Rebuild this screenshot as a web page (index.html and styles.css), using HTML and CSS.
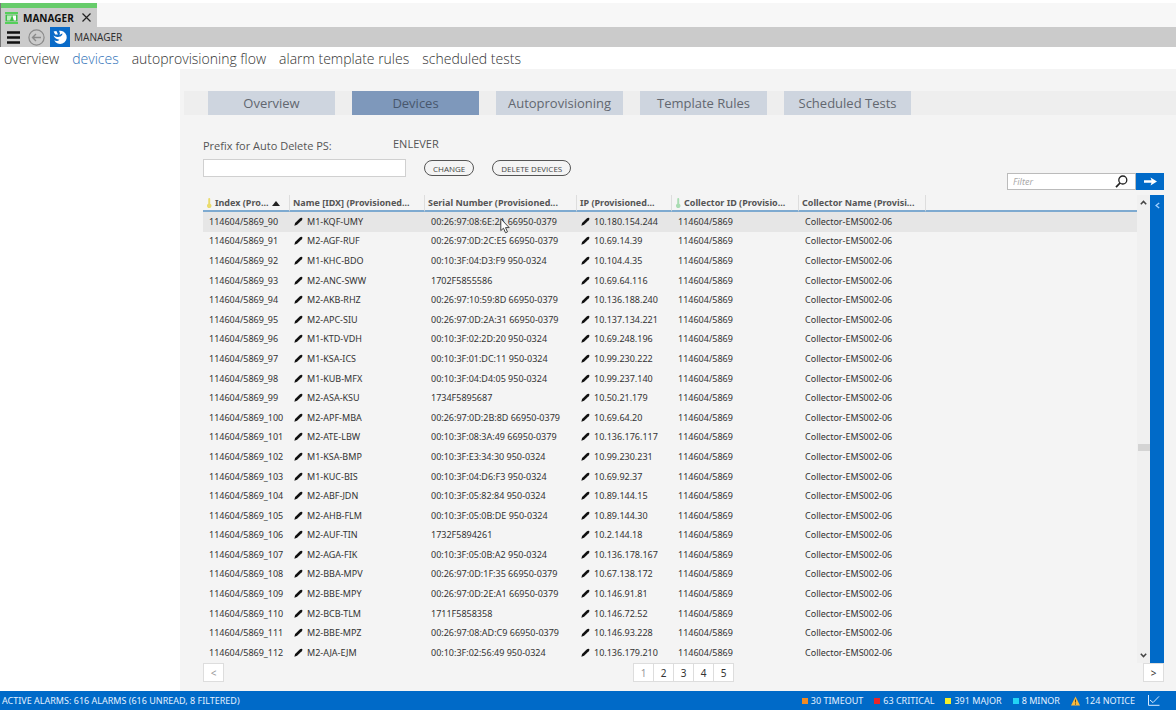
FILE: index.html
```html
<!DOCTYPE html>
<html lang="en">
<head>
    <meta charset="UTF-8">
    <meta name="viewport" content="width=device-width, initial-scale=1.0">
    <title>Manager - Devices</title>
    <link rel="stylesheet" href="styles.css">
</head>
<body>
    <svg class="sprite" aria-hidden="true">
        <symbol id="pencil" viewBox="0 0 10 10">
            <path d="M0.4 9.6 L1.2 6.8 L6.6 1.4 Q8 0.3 9.1 1.1 Q9.9 2.1 8.6 3.5 L3.4 8.7 Z"/>
        </symbol>
        <symbol id="key" viewBox="0 0 8 14">
            <path d="M3 1.5 a1.3 1.3 0 0 1 2.6 0 V8 a3 3 0 1 1 -2.6 0 Z"/>
        </symbol>
    </svg>

    <header class="window-tabs">
        <div class="window-tab">
            <svg class="app-icon" width="13" height="12" viewBox="0 0 13 12">
                <path d="M0 0 H13 V2 H0 Z M0 10 H13 V12 H0 Z" fill="#55cf5a"/>
                <path d="M0.5 2.6 H12.5 V9.4 H0.5 Z" fill="#3fbf48"/>
                <path d="M2 3.4 H7 L5 8.6 H2 Z" fill="#b9efbb"/>
                <path d="M7.4 3.4 H11 V8.6 H8.8 Z" fill="#fff"/>
            </svg>
            <span>MANAGER</span>
            <button class="close" aria-label="Close tab">
                <svg width="9" height="9" viewBox="0 0 9 9"><path d="M0.5 0.5 L8.5 8.5 M8.5 0.5 L0.5 8.5"/></svg>
            </button>
        </div>
    </header>

    <div class="toolbar">
        <button class="menu" aria-label="Menu">
            <svg width="13" height="13" viewBox="0 0 13 13"><path d="M0 1.5 H13 M0 6.5 H13 M0 11.5 H13" stroke="#111" stroke-width="2.4"/></svg>
        </button>
        <button class="back" aria-label="Back">
            <svg width="17" height="17" viewBox="0 0 17 17" fill="none" stroke="#8a8a8a">
                <circle cx="8.5" cy="8.5" r="7.6" stroke-width="1.2"/>
                <path d="M13 8.5 H4.5 M8 5 L4.5 8.5 L8 12" stroke-width="1.4"/>
            </svg>
        </button>
        <svg class="module-icon" width="20" height="20" viewBox="0 0 20 20">
            <rect width="20" height="20" fill="#0a6bc8"/>
            <path d="M9 3.8 A6.6 6.6 0 1 1 4.2 13.2 Q7.4 15 9.4 12.8 Q5.4 12.6 3.4 8.6 Q6 10.6 9 9.8 Q12 9.6 12.6 6.6 Q11 6.8 9.6 8.2 Q10.4 5.6 9 3.8 Z" fill="#fff"/>
            <path d="M3.6 4.6 L6.4 4 L8 7.6 L5.2 7.4 Z" fill="#fff"/>
        </svg>
        <span>MANAGER</span>
    </div>

    <nav class="page-nav">
        <a href="#">overview</a>
        <a href="#" class="current">devices</a>
        <a href="#">autoprovisioning flow</a>
        <a href="#">alarm template rules</a>
        <a href="#">scheduled tests</a>
    </nav>

    <main class="panel">
        <div class="tab-strip">
            <button class="tab">Overview</button>
            <button class="tab active">Devices</button>
            <button class="tab">Autoprovisioning</button>
            <button class="tab">Template Rules</button>
            <button class="tab">Scheduled Tests</button>
        </div>

        <div class="tools">
            <div class="prefix-form">
                <div class="prefix-labels">
                    <label for="prefix">Prefix for Auto Delete PS:</label>
                    <span class="prefix-value">ENLEVER</span>
                </div>
                <div class="prefix-controls">
                    <input type="text" id="prefix">
                    <button class="pill">CHANGE</button>
                    <button class="pill">DELETE DEVICES</button>
                </div>
            </div>
            <div class="filter">
                <div class="filter-box">
                    <input type="text" placeholder="Filter" aria-label="Filter">
                    <svg width="13" height="13" viewBox="0 0 13 13" fill="none" stroke="#222">
                        <circle cx="7.8" cy="5" r="4" stroke-width="1.3"/>
                        <path d="M5 8 L1 12.2" stroke-width="1.8"/>
                    </svg>
                </div>
                <button class="go" aria-label="Apply filter">
                    <svg width="13" height="9" viewBox="0 0 13 9"><path d="M0 3.2 H7.5 L6.5 0.5 L13 4.5 L6.5 8.5 L7.5 5.8 H0 Z" fill="#fff"/></svg>
                </button>
            </div>
        </div>

        <div class="grid">
            <div class="table-wrap">
                <table class="devices">
                    <colgroup>
                        <col class="col-index"><col class="col-name"><col class="col-serial"><col class="col-ip"><col class="col-cid"><col class="col-cname"><col>
                    </colgroup>
                    <thead>
                        <tr>
                            <th><svg class="key yellow"><use href="#key"/></svg>Index (Pro...<span class="sort"></span></th>
                            <th>Name [IDX] (Provisioned...</th>
                            <th>Serial Number (Provisioned...</th>
                            <th>IP (Provisioned...</th>
                            <th><svg class="key green"><use href="#key"/></svg>Collector ID (Provisio...</th>
                            <th>Collector Name (Provisi...</th>
                            <th></th>
                        </tr>
                    </thead>
                    <tbody>
                        <tr class="selected"><td>114604/5869_90</td><td><svg class="edit"><use href="#pencil"/></svg>M1-KQF-UMY</td><td class="pointed">00:26:97:08:6E:2A 66950-0379<svg class="cursor" viewBox="0 0 10 16"><path d="M0.8 0.8 V12.6 L3.5 10.2 L5.5 14.8 L7.5 13.9 L5.5 9.6 H9.2 Z"/></svg></td><td><svg class="edit"><use href="#pencil"/></svg>10.180.154.244</td><td>114604/5869</td><td>Collector-EMS002-06</td><td></td></tr>
                        <tr><td>114604/5869_91</td><td><svg class="edit"><use href="#pencil"/></svg>M2-AGF-RUF</td><td>00:26:97:0D:2C:E5 66950-0379</td><td><svg class="edit"><use href="#pencil"/></svg>10.69.14.39</td><td>114604/5869</td><td>Collector-EMS002-06</td><td></td></tr>
                        <tr><td>114604/5869_92</td><td><svg class="edit"><use href="#pencil"/></svg>M1-KHC-BDO</td><td>00:10:3F:04:D3:F9 950-0324</td><td><svg class="edit"><use href="#pencil"/></svg>10.104.4.35</td><td>114604/5869</td><td>Collector-EMS002-06</td><td></td></tr>
                        <tr><td>114604/5869_93</td><td><svg class="edit"><use href="#pencil"/></svg>M2-ANC-SWW</td><td>1702F5855586</td><td><svg class="edit"><use href="#pencil"/></svg>10.69.64.116</td><td>114604/5869</td><td>Collector-EMS002-06</td><td></td></tr>
                        <tr><td>114604/5869_94</td><td><svg class="edit"><use href="#pencil"/></svg>M2-AKB-RHZ</td><td>00:26:97:10:59:8D 66950-0379</td><td><svg class="edit"><use href="#pencil"/></svg>10.136.188.240</td><td>114604/5869</td><td>Collector-EMS002-06</td><td></td></tr>
                        <tr><td>114604/5869_95</td><td><svg class="edit"><use href="#pencil"/></svg>M2-APC-SIU</td><td>00:26:97:0D:2A:31 66950-0379</td><td><svg class="edit"><use href="#pencil"/></svg>10.137.134.221</td><td>114604/5869</td><td>Collector-EMS002-06</td><td></td></tr>
                        <tr><td>114604/5869_96</td><td><svg class="edit"><use href="#pencil"/></svg>M1-KTD-VDH</td><td>00:10:3F:02:2D:20 950-0324</td><td><svg class="edit"><use href="#pencil"/></svg>10.69.248.196</td><td>114604/5869</td><td>Collector-EMS002-06</td><td></td></tr>
                        <tr><td>114604/5869_97</td><td><svg class="edit"><use href="#pencil"/></svg>M1-KSA-ICS</td><td>00:10:3F:01:DC:11 950-0324</td><td><svg class="edit"><use href="#pencil"/></svg>10.99.230.222</td><td>114604/5869</td><td>Collector-EMS002-06</td><td></td></tr>
                        <tr><td>114604/5869_98</td><td><svg class="edit"><use href="#pencil"/></svg>M1-KUB-MFX</td><td>00:10:3F:04:D4:05 950-0324</td><td><svg class="edit"><use href="#pencil"/></svg>10.99.237.140</td><td>114604/5869</td><td>Collector-EMS002-06</td><td></td></tr>
                        <tr><td>114604/5869_99</td><td><svg class="edit"><use href="#pencil"/></svg>M2-ASA-KSU</td><td>1734F5895687</td><td><svg class="edit"><use href="#pencil"/></svg>10.50.21.179</td><td>114604/5869</td><td>Collector-EMS002-06</td><td></td></tr>
                        <tr><td>114604/5869_100</td><td><svg class="edit"><use href="#pencil"/></svg>M2-APF-MBA</td><td>00:26:97:0D:2B:8D 66950-0379</td><td><svg class="edit"><use href="#pencil"/></svg>10.69.64.20</td><td>114604/5869</td><td>Collector-EMS002-06</td><td></td></tr>
                        <tr><td>114604/5869_101</td><td><svg class="edit"><use href="#pencil"/></svg>M2-ATE-LBW</td><td>00:10:3F:08:3A:49 66950-0379</td><td><svg class="edit"><use href="#pencil"/></svg>10.136.176.117</td><td>114604/5869</td><td>Collector-EMS002-06</td><td></td></tr>
                        <tr><td>114604/5869_102</td><td><svg class="edit"><use href="#pencil"/></svg>M1-KSA-BMP</td><td>00:10:3F:E3:34:30 950-0324</td><td><svg class="edit"><use href="#pencil"/></svg>10.99.230.231</td><td>114604/5869</td><td>Collector-EMS002-06</td><td></td></tr>
                        <tr><td>114604/5869_103</td><td><svg class="edit"><use href="#pencil"/></svg>M1-KUC-BIS</td><td>00:10:3F:04:D6:F3 950-0324</td><td><svg class="edit"><use href="#pencil"/></svg>10.69.92.37</td><td>114604/5869</td><td>Collector-EMS002-06</td><td></td></tr>
                        <tr><td>114604/5869_104</td><td><svg class="edit"><use href="#pencil"/></svg>M2-ABF-JDN</td><td>00:10:3F:05:82:84 950-0324</td><td><svg class="edit"><use href="#pencil"/></svg>10.89.144.15</td><td>114604/5869</td><td>Collector-EMS002-06</td><td></td></tr>
                        <tr><td>114604/5869_105</td><td><svg class="edit"><use href="#pencil"/></svg>M2-AHB-FLM</td><td>00:10:3F:05:0B:DE 950-0324</td><td><svg class="edit"><use href="#pencil"/></svg>10.89.144.30</td><td>114604/5869</td><td>Collector-EMS002-06</td><td></td></tr>
                        <tr><td>114604/5869_106</td><td><svg class="edit"><use href="#pencil"/></svg>M2-AUF-TIN</td><td>1732F5894261</td><td><svg class="edit"><use href="#pencil"/></svg>10.2.144.18</td><td>114604/5869</td><td>Collector-EMS002-06</td><td></td></tr>
                        <tr><td>114604/5869_107</td><td><svg class="edit"><use href="#pencil"/></svg>M2-AGA-FIK</td><td>00:10:3F:05:0B:A2 950-0324</td><td><svg class="edit"><use href="#pencil"/></svg>10.136.178.167</td><td>114604/5869</td><td>Collector-EMS002-06</td><td></td></tr>
                        <tr><td>114604/5869_108</td><td><svg class="edit"><use href="#pencil"/></svg>M2-BBA-MPV</td><td>00:26:97:0D:1F:35 66950-0379</td><td><svg class="edit"><use href="#pencil"/></svg>10.67.138.172</td><td>114604/5869</td><td>Collector-EMS002-06</td><td></td></tr>
                        <tr><td>114604/5869_109</td><td><svg class="edit"><use href="#pencil"/></svg>M2-BBE-MPY</td><td>00:26:97:0D:2E:A1 66950-0379</td><td><svg class="edit"><use href="#pencil"/></svg>10.146.91.81</td><td>114604/5869</td><td>Collector-EMS002-06</td><td></td></tr>
                        <tr><td>114604/5869_110</td><td><svg class="edit"><use href="#pencil"/></svg>M2-BCB-TLM</td><td>1711F5858358</td><td><svg class="edit"><use href="#pencil"/></svg>10.146.72.52</td><td>114604/5869</td><td>Collector-EMS002-06</td><td></td></tr>
                        <tr><td>114604/5869_111</td><td><svg class="edit"><use href="#pencil"/></svg>M2-BBE-MPZ</td><td>00:26:97:08:AD:C9 66950-0379</td><td><svg class="edit"><use href="#pencil"/></svg>10.146.93.228</td><td>114604/5869</td><td>Collector-EMS002-06</td><td></td></tr>
                        <tr><td>114604/5869_112</td><td><svg class="edit"><use href="#pencil"/></svg>M2-AJA-EJM</td><td>00:10:3F:02:56:49 950-0324</td><td><svg class="edit"><use href="#pencil"/></svg>10.136.179.210</td><td>114604/5869</td><td>Collector-EMS002-06</td><td></td></tr>
                    </tbody>
                </table>
            </div>
            <div class="scrollbar">
                <svg width="7" height="5" viewBox="0 0 7 5"><path d="M0.8 4.2 L3.5 1.4 L6.2 4.2"/></svg>
                <div class="thumb"></div>
                <svg width="7" height="5" viewBox="0 0 7 5"><path d="M0.8 0.8 L3.5 3.6 L6.2 0.8"/></svg>
            </div>
            <button class="drawer" aria-label="Expand panel">
                <svg width="5" height="7" viewBox="0 0 5 7"><path d="M4.2 1 L1 3.5 L4.2 6"/></svg>
            </button>
        </div>

        <div class="pager">
            <button disabled>&lt;</button>
            <div class="pages">
                <button disabled>1</button>
                <button>2</button>
                <button>3</button>
                <button>4</button>
                <button>5</button>
            </div>
            <button>&gt;</button>
        </div>
    </main>

    <footer class="status">
        <span class="active-alarms">ACTIVE ALARMS: 616 ALARMS (616 UNREAD, 8 FILTERED)</span>
        <span class="alarm timeout">30 TIMEOUT</span>
        <span class="alarm critical">63 CRITICAL</span>
        <span class="alarm major">391 MAJOR</span>
        <span class="alarm minor">8 MINOR</span>
        <span class="notice">
            <svg width="9" height="10" viewBox="0 0 9 10"><path d="M4.5 0.5 L9 9.5 H0 Z" fill="#f8b93c"/><path d="M4.5 3.5 V6.5 M4.5 7.4 V8.6" stroke="#5c4a20"/></svg>
            124 NOTICE
        </span>
        <svg width="12" height="11" viewBox="0 0 12 11" fill="none" stroke="#d8eaff"><path d="M0.5 0 V10.3 H11.5 M2 5 L5 7.6 L11 1.4"/></svg>
    </footer>
</body>
</html>
```
FILE: styles.css
```css
* {
    box-sizing: border-box;
}
body {
    margin: 0;
    height: 100vh;
    display: flex;
    flex-direction: column;
    padding: 3px 0 2px;
    background: #fff;
    color: #333;
    font-family: "Noto Sans", "Open Sans", sans-serif;
    font-size: 9px;
}
button, input {
    font-family: inherit;
    font-size: inherit;
    color: inherit;
    margin: 0;
    padding: 0;
    border: 0;
    background: none;
}
svg {
    flex: none;
}
.sprite {
    position: absolute;
    width: 0;
    height: 0;
}

/* window chrome */
.window-tabs {
    display: flex;
    height: 24px;
    background: #f7f7f7;
    border-left: 1px solid #777;
}
.window-tab {
    display: flex;
    align-items: center;
    gap: 5px;
    width: 96px;
    padding-left: 4px;
    border-top: 5px solid #67cc6b;
    background: #cbcbcb;
    color: #111;
    font-family: "Open Sans", sans-serif;
    font-size: 10px;
    font-weight: bold;
}
.close {
    display: flex;
    margin-left: auto;
    margin-right: 6px;
}
.close path {
    stroke: #222;
    stroke-width: 1.2;
}
.toolbar {
    display: flex;
    align-items: center;
    height: 20px;
    padding-left: 6px;
    background: #cbcbcb;
    border-left: 1px solid #777;
    font-size: 10px;
}
.toolbar button {
    display: flex;
    margin-right: 8px;
}
.toolbar .back {
    margin-right: 5px;
}
.module-icon {
    margin-right: 4px;
}
.page-nav {
    display: flex;
    gap: 13px;
    height: 22px;
    padding-left: 4px;
    line-height: 24px;
    font-family: "Open Sans", sans-serif;
    font-size: 14px;
    font-weight: 300;
}
.page-nav a {
    color: #333;
    text-decoration: none;
}
.page-nav .current {
    color: #2f70b8;
}

/* main panel */
.panel {
    flex: 1;
    min-height: 0;
    display: flex;
    flex-direction: column;
    margin-left: 180px;
    padding: 22px 12px 9px 23px;
    background: #f4f4f4;
}
.tab-strip {
    display: flex;
    gap: 17px;
    height: 24px;
    margin: 0 -12px 0 -19px;
    padding-left: 24px;
    background: #eee;
}
.tab {
    width: 127px;
    background: #ced5df;
    color: #62676f;
    font-family: "Open Sans", sans-serif;
    font-size: 13px;
}
.tab.active {
    background: #7e98bb;
    color: #48576d;
}
.tools {
    display: flex;
    justify-content: space-between;
    align-items: flex-end;
    height: 80px;
}
.prefix-form {
    padding-bottom: 18px;
    font-family: "Open Sans", sans-serif;
    font-size: 11px;
}
.prefix-labels {
    display: flex;
    height: 24px;
    line-height: 17px;
    color: #555;
}
.prefix-labels label {
    width: 190px;
    padding-top: 2px;
}
.prefix-controls {
    display: flex;
    align-items: center;
}
.prefix-controls input {
    width: 203px;
    height: 18px;
    padding: 0 4px;
    border: 1px solid #d0d0d0;
    background: #fff;
}
.pill {
    height: 16px;
    margin-left: 18px;
    padding: 0 8px;
    border: 1px solid #555;
    border-radius: 8px;
    color: #444;
    font-size: 8px;
}
.filter {
    display: flex;
    height: 17px;
    margin-bottom: 5px;
}
.filter-box {
    display: flex;
    align-items: center;
    width: 129px;
    padding: 0 7px 0 5px;
    border: 1px solid #bbb;
    background: #fff;
}
.filter-box input {
    flex: 1;
    min-width: 0;
}
.filter-box input::placeholder {
    color: #aaa;
    font-style: italic;
}
.go {
    display: flex;
    align-items: center;
    justify-content: center;
    width: 28px;
    background: #006ac8;
}

/* device table */
.grid {
    flex: 1;
    min-height: 0;
    display: flex;
}
.table-wrap {
    flex: 1;
    min-width: 0;
}
.devices {
    width: 100%;
    height: 100%;
    table-layout: fixed;
    border-collapse: separate;
    border-spacing: 0;
    white-space: nowrap;
}
.col-index {
    width: 87px;
}
.col-name {
    width: 135px;
}
.col-serial {
    width: 152px;
}
.col-ip {
    width: 95px;
}
.col-cid, .col-cname {
    width: 127px;
}
.devices th {
    height: 17px;
    padding: 0 0 0 3px;
    border-right: 1px solid #ddd;
    border-bottom: 2px solid #7eaad0;
    color: #555;
    font-weight: bold;
    text-align: left;
    line-height: 14px;
}
.devices td {
    padding: 0 0 0 6px;
    line-height: 12px;
}
.devices th:last-child {
    border-right: 0;
}
.selected td {
    background: #e6e6e6;
}
.key {
    width: 6px;
    height: 12px;
    margin-right: 3px;
    vertical-align: middle;
}
.yellow {
    fill: #eadb6c;
}
.green {
    fill: #a9dcb2;
}
.sort {
    display: inline-block;
    margin-left: 4px;
    border: 4px solid transparent;
    border-top: 0;
    border-bottom: 5px solid #222;
}
.edit {
    width: 9px;
    height: 9px;
    margin-right: 4px;
    margin-left: -2px;
    vertical-align: -1px;
    fill: #111;
}
.pointed {
    position: relative;
}
.cursor {
    position: absolute;
    left: 75px;
    top: 6px;
    width: 10px;
    height: 16px;
    fill: #fff;
    stroke: #444;
}
.scrollbar {
    display: flex;
    flex-direction: column;
    align-items: center;
    justify-content: space-between;
    width: 13px;
    padding: 5px 0;
    background: #f0f0f0;
}
.scrollbar path {
    fill: none;
    stroke: #444;
    stroke-width: 1.5;
}
.thumb {
    width: 12px;
    height: 7px;
    margin-top: 36px;
    background: #d4d4d4;
}
.drawer {
    display: flex;
    justify-content: center;
    width: 14px;
    padding-top: 7px;
    background: #006ac8;
}
.drawer path {
    fill: none;
    stroke: #9fd0ff;
    stroke-width: 1.4;
}
.pager {
    display: flex;
    justify-content: space-between;
}
.pager button {
    min-width: 21px;
    height: 19px;
    border: 1px solid #ddd;
    background: #fff;
    font-size: 10px;
}
.pager button:disabled {
    color: #999;
}
.pages {
    display: flex;
}
.pages button + button {
    margin-left: -1px;
}

/* alarm bar */
.status {
    display: flex;
    align-items: center;
    height: 19px;
    padding: 0 16px 0 2px;
    background: #006ac8;
    color: #e4f1ff;
}
.active-alarms {
    flex: 1;
}
.alarm {
    margin-right: 11px;
}
.alarm::before {
    content: "";
    display: inline-block;
    width: 6px;
    height: 6px;
    margin-right: 3px;
}
.timeout::before {
    background: #f08a24;
}
.critical::before {
    background: #e8262a;
}
.major::before {
    background: #f2ee2c;
}
.minor::before {
    background: #22d3f5;
}
.notice {
    display: flex;
    align-items: center;
    gap: 5px;
    margin-right: 13px;
}
```
